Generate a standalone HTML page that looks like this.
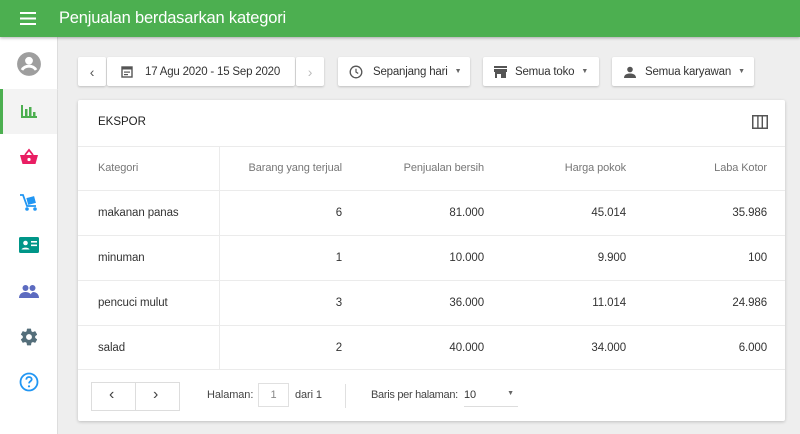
<!DOCTYPE html>
<html><head><meta charset="utf-8"><style>
*{box-sizing:border-box;margin:0;padding:0}
body{width:800px;height:434px;overflow:hidden;background:#eeeeee;font-family:"Liberation Sans",Roboto,sans-serif;color:#333;position:relative}
span,div{white-space:nowrap}
.hdr{position:absolute;left:0;top:0;width:800px;height:37px;background:#4caf50;box-shadow:0 1px 3px rgba(0,0,0,.3);z-index:3}
.hdr .t{position:absolute;left:59px;top:9px;color:#fff;font-size:16.5px;letter-spacing:-0.2px}
.side{position:absolute;left:0;top:37px;width:58px;height:397px;background:#fff;border-right:1px solid #ddd}
.ic{position:absolute;left:0;width:58px;display:flex;justify-content:center}
.btn{position:absolute;top:57px;height:29px;background:#fff;box-shadow:0 1px 2px rgba(0,0,0,.2);border-radius:2px;font-size:11.5px;letter-spacing:-0.2px;color:#333;display:flex;align-items:center}
.card{position:absolute;left:78px;top:100px;width:707px;height:321px;background:#fff;box-shadow:0 1px 3px rgba(0,0,0,.2);border-radius:2px}
.row{position:absolute;left:0;width:707px;border-top:1px solid #ebebeb;font-size:11.5px;letter-spacing:-0.1px;color:#333}
.c{position:absolute;top:0;text-align:right}
.vd{position:absolute;left:141px;top:46px;width:1px;height:223px;background:#ebebeb}
.ft span{font-size:11px}
</style></head><body>
<div class="hdr">
<svg style="position:absolute;left:20px;top:12px" width="16" height="13"><rect y="0" width="16" height="2" fill="#fff"/><rect y="5.5" width="16" height="2" fill="#fff"/><rect y="11" width="16" height="2" fill="#fff"/></svg>
<div class="t">Penjualan berdasarkan kategori</div></div>
<div class="side">
<div class="ic" style="top:14px"><svg width="26" height="26" viewBox="0 0 24 24"><circle cx="12" cy="12" r="11" fill="#9e9e9e"/><circle cx="12" cy="9" r="3.6" fill="#fff"/><path d="M5.5 17.5c1.5-2.5 4-3.5 6.5-3.5s5 1 6.5 3.5" stroke="#fff" stroke-width="2.6" fill="none"/></svg></div>
<div style="position:absolute;left:0;top:52px;width:58px;height:1px;background:#e4e4e4"></div>
<div style="position:absolute;left:0;top:52px;width:57px;height:45px;background:#f3f3f3;border-left:3px solid #4caf50"></div>
<div class="ic" style="top:66px"><svg width="18" height="16"><rect x="1" y="2" width="2" height="13" fill="#4caf50"/><rect x="5" y="6" width="2.5" height="9" fill="#4caf50"/><rect x="9" y="4" width="2.5" height="11" fill="#4caf50"/><rect x="13" y="9" width="2.5" height="6" fill="#4caf50"/><rect x="1" y="13" width="16" height="2" fill="#4caf50"/></svg></div>
<div class="ic" style="top:111px"><svg width="20" height="18" viewBox="0 0 20 18"><path d="M6 7l4-5 4 5" stroke="#e91e63" stroke-width="1.8" fill="none"/><path d="M1 7h18l-2.5 9h-13z" fill="#e91e63"/><circle cx="10" cy="11.5" r="1.6" fill="#fff"/></svg></div>
<div class="ic" style="top:155px"><svg width="20" height="20" viewBox="0 0 20 20"><path d="M1 3h3l4 11h9" stroke="#2196f3" stroke-width="1.8" fill="none"/><rect x="8" y="5" width="8" height="7" fill="#2196f3" transform="rotate(-15 12 8)"/><circle cx="8" cy="17" r="1.8" fill="#2196f3"/><circle cx="16" cy="17" r="1.8" fill="#2196f3"/></svg></div>
<div class="ic" style="top:200px"><svg width="20" height="16" viewBox="0 0 20 16"><rect width="20" height="16" rx="1.5" fill="#009688"/><circle cx="6.5" cy="6" r="2.3" fill="#fff"/><path d="M2.5 12.5c1-2.5 7-2.5 8 0z" fill="#fff"/><rect x="12" y="4" width="6" height="1.6" fill="#fff"/><rect x="12" y="7.5" width="6" height="1.6" fill="#fff"/></svg></div>
<div class="ic" style="top:247px"><svg width="20" height="14" viewBox="0 0 20 14"><circle cx="6.5" cy="4" r="3" fill="#5c6bc0"/><circle cx="13.5" cy="4" r="3" fill="#5c6bc0"/><path d="M0 14c0-4 3-6 6.5-6s6.5 2 6.5 6z" fill="#5c6bc0"/><path d="M11 14c0-3 1-5 3-6 3 0 6 2 6 6z" fill="#5c6bc0"/></svg></div>
<div class="ic" style="top:290px"><svg width="20" height="20" viewBox="0 0 24 24"><path fill="#546e7a" d="M19.4 13c.04-.3.06-.6.06-1s-.02-.7-.06-1l2.1-1.6c.2-.15.24-.42.12-.64l-2-3.460c-.12-.22-.39-.3-.61-.22l-2.49 1c-.52-.4-1.08-.73-1.690-.98l-.38-2.650C14.46 2.18 14.25 2 14 2h-4c-.25 0-.46.18-.49.42l-.38 2.65c-.61.25-1.17.59-1.690.98l-2.49-1c-.23-.09-.49 0-.61.22l-2 3.460c-.13.22-.07.49.12.64L4.57 11c-.04.32-.07.65-.07 1s.03.68.07 1l-2.11 1.65c-.19.15-.24.42-.12.64l2 3.46c.12.22.39.3.61.22l2.49-1c.52.4 1.080.73 1.690.98l.38 2.65c.03.24.24.42.49.42h4c.25 0 .46-.18.49-.42l.38-2.650c.61-.25 1.17-.59 1.69-.98l2.49 1c.23.09.49 0 .61-.22l2-3.46c.12-.22.07-.49-.12-.64zM12 15.5c-1.93 0-3.5-1.57-3.5-3.5s1.57-3.5 3.5-3.5 3.5 1.57 3.5 3.5-1.57 3.5-3.5 3.5z"/></svg></div>
<div class="ic" style="top:335px"><svg width="20" height="20" viewBox="0 0 20 20"><circle cx="10" cy="10" r="8.5" stroke="#2196f3" stroke-width="1.8" fill="none"/><path d="M7.3 7.6c0-1.6 1.2-2.6 2.7-2.6s2.7 1 2.7 2.4c0 1.9-2.7 2-2.7 4" stroke="#2196f3" stroke-width="1.8" fill="none"/><circle cx="10" cy="14.3" r="1.1" fill="#2196f3"/></svg></div>
</div>

<div class="btn" style="left:78px;width:28px;justify-content:center;color:#555;font-size:14px">‹</div>
<div class="btn" style="left:107px;width:188px;padding-left:14px"><svg width="12" height="13" viewBox="0 0 12 13"><rect x="1" y="2" width="10" height="10" stroke="#555" stroke-width="1.4" fill="none"/><rect x="1" y="2" width="10" height="2.5" fill="#555"/><rect x="3" y="6.5" width="6" height="1.2" fill="#555"/><rect x="3" y="9" width="4" height="1.2" fill="#555"/></svg><span style="margin-left:12px">17 Agu 2020 - 15 Sep 2020</span></div>
<div class="btn" style="left:296px;width:28px;justify-content:center;color:#bbb;font-size:14px">›</div>
<div class="btn" style="left:338px;width:132px;padding-left:11px"><svg width="14" height="14"><circle cx="7" cy="7" r="5.8" stroke="#555" stroke-width="1.3" fill="none"/><path d="M7 3.8V7l2.2 1.5" stroke="#555" stroke-width="1.2" fill="none"/></svg><span style="margin-left:10px">Sepanjang hari</span><span style="margin-left:7px;font-size:7px;color:#666">▼</span></div>
<div class="btn" style="left:483px;width:116px;padding-left:11px"><svg width="13" height="12"><rect x="0" y="0" width="13" height="2" fill="#555"/><rect x="0" y="3" width="13" height="3" fill="#555"/><rect x="1" y="6" width="11" height="6" fill="#555"/><rect x="3" y="8" width="4" height="4" fill="#fff"/></svg><span style="margin-left:8px">Semua toko</span><span style="margin-left:7px;font-size:7px;color:#666">▼</span></div>
<div class="btn" style="left:612px;width:142px;padding-left:12px"><svg width="12" height="12"><circle cx="6" cy="3.5" r="2.8" fill="#555"/><path d="M0 12c0-3.5 3-4.5 6-4.5s6 1 6 4.5z" fill="#555"/></svg><span style="margin-left:9px">Semua karyawan</span><span style="margin-left:7px;font-size:7px;color:#666">▼</span></div>

<div class="card">
<div style="position:absolute;left:20px;top:16px;font-size:11.5px;color:#222">EKSPOR</div>
<svg style="position:absolute;left:674px;top:15px" width="16" height="14"><rect x="0.75" y="0.75" width="14.5" height="12.5" stroke="#555" stroke-width="1.5" fill="none"/><rect x="5.2" y="1" width="1.4" height="12" fill="#555"/><rect x="9.6" y="1" width="1.4" height="12" fill="#555"/></svg>
<div class="row" style="top:46px;height:44px;color:#777;font-size:11px"><span style="position:absolute;left:20px;top:15px">Kategori</span><span class="c" style="right:443px;top:15px">Barang yang terjual</span><span class="c" style="right:301px;top:15px">Penjualan bersih</span><span class="c" style="right:159px;top:15px">Harga pokok</span><span class="c" style="right:18px;top:15px">Laba Kotor</span></div>
<div class="row" style="top:90px;height:45px"><span style="position:absolute;left:20px;top:16px">makanan panas</span><span class="c" style="right:443px;top:16px">6</span><span class="c" style="right:301px;top:16px">81.000</span><span class="c" style="right:159px;top:16px">45.014</span><span class="c" style="right:18px;top:16px">35.986</span></div>
<div class="row" style="top:135px;height:45px"><span style="position:absolute;left:20px;top:16px">minuman</span><span class="c" style="right:443px;top:16px">1</span><span class="c" style="right:301px;top:16px">10.000</span><span class="c" style="right:159px;top:16px">9.900</span><span class="c" style="right:18px;top:16px">100</span></div>
<div class="row" style="top:180px;height:45px"><span style="position:absolute;left:20px;top:16px">pencuci mulut</span><span class="c" style="right:443px;top:16px">3</span><span class="c" style="right:301px;top:16px">36.000</span><span class="c" style="right:159px;top:16px">11.014</span><span class="c" style="right:18px;top:16px">24.986</span></div>
<div class="row" style="top:225px;height:44px"><span style="position:absolute;left:20px;top:16px">salad</span><span class="c" style="right:443px;top:16px">2</span><span class="c" style="right:301px;top:16px">40.000</span><span class="c" style="right:159px;top:16px">34.000</span><span class="c" style="right:18px;top:16px">6.000</span></div>
<div class="vd"></div>
<div class="row ft" style="top:269px;height:52px">
<div style="position:absolute;left:13px;top:12px;width:89px;height:29px;border:1px solid #ddd"><div style="position:absolute;left:43px;top:0;width:1px;height:27px;background:#ddd"></div><span style="position:absolute;left:17px;top:3px;font-size:16px;color:#444">‹</span><span style="position:absolute;left:61px;top:3px;font-size:16px;color:#444">›</span></div>
<span style="position:absolute;left:129px;top:19px;color:#444">Halaman:</span>
<div style="position:absolute;left:180px;top:13px;width:31px;height:24px;border:1px solid #e0e0e0;color:#888;text-align:center;line-height:22px;font-size:11px">1</div>
<span style="position:absolute;left:217px;top:19px;color:#444">dari 1</span>
<div style="position:absolute;left:267px;top:14px;width:1px;height:24px;background:#e0e0e0"></div>
<span style="position:absolute;left:293px;top:19px;color:#444;letter-spacing:-0.3px">Baris per halaman:</span>
<div style="position:absolute;left:386px;top:15px;width:54px;height:22px;border-bottom:1px solid #ddd;color:#333;padding-top:4px;font-size:11px">10<span style="position:absolute;right:4px;top:5px;font-size:7px;color:#666">▼</span></div>
</div>
</div>
</body></html>
